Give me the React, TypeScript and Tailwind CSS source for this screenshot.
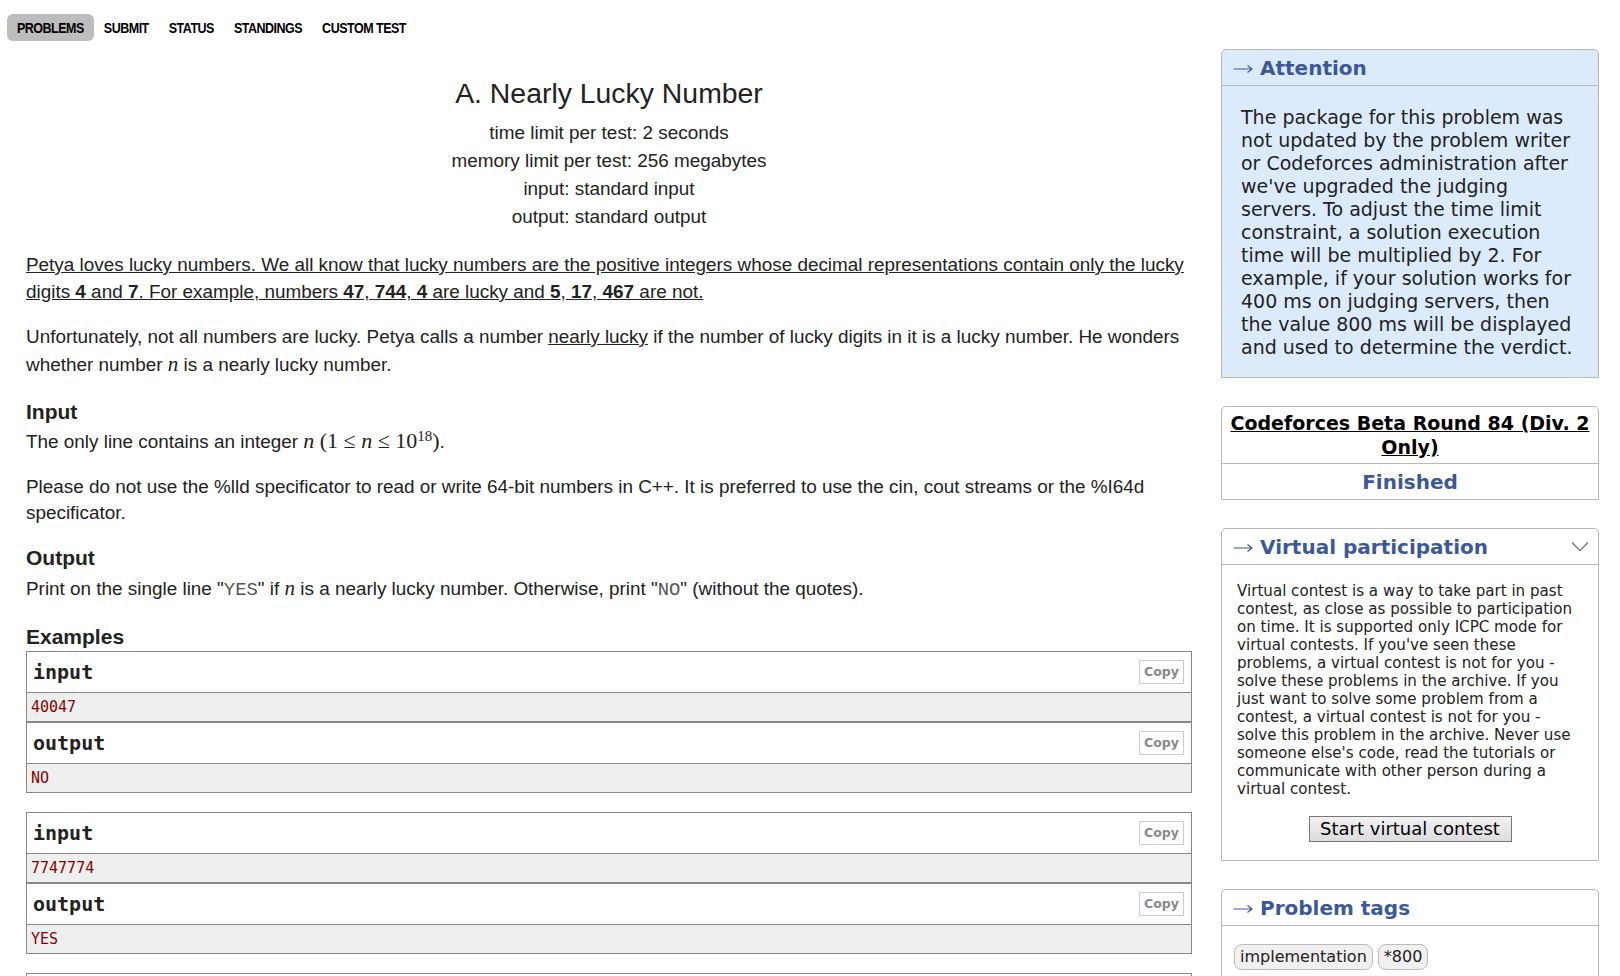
import React from 'react';

const samples = [
  { input: '40047', output: 'NO' },
  { input: '7747774', output: 'YES' },
];

const navItems = ['PROBLEMS', 'SUBMIT', 'STATUS', 'STANDINGS', 'CUSTOM TEST'];

function CopyButton() {
  return (
    <span className="flex h-[24px] w-[45px] items-center justify-center border border-[#ccc] bg-white font-['DejaVu_Sans',Verdana,sans-serif] text-[12.5px] font-bold text-[#888]">
      Copy
    </span>
  );
}

function SampleSection({ title, data, first }: { title: string; data: string; first?: boolean }) {
  return (
    <div className={first ? '' : 'border-t-2 border-[#888]'}>
      <div className="flex h-[40px] items-center justify-between pl-[6px] pr-[7px]">
        <span className="font-['DejaVu_Sans_Mono',monospace] text-[20px] font-bold text-[#222]">{title}</span>
        <CopyButton />
      </div>
      <div className="flex h-[29px] items-center border-t border-[#888] bg-[#efefef] pl-[4px] font-['DejaVu_Sans_Mono',monospace] text-[15px] text-[#8b0000]">
        {data}
      </div>
    </div>
  );
}

function Arrow() {
  return (
    <svg width="20" height="10" viewBox="0 0 20 10" fill="none" className="mr-[7px] mt-[2px]">
      <path d="M0.5 5H19M14.5 1.5L19 5L14.5 8.5" stroke="#3b5998" strokeWidth="1.2" />
    </svg>
  );
}

function SideBox({
  title,
  className,
  chevron,
  children,
}: {
  title: string;
  className?: string;
  chevron?: boolean;
  children: React.ReactNode;
}) {
  return (
    <div className={`rounded-t-[5px] border border-[#b9b9b9] ${className ?? ''}`}>
      <div className="flex h-[36px] items-center justify-between border-b border-[#b9b9b9] pl-[11px] pr-[9px]">
        <span className="flex items-center text-[20px] font-bold text-[#3b5998]">
          <Arrow />
          {title}
        </span>
        {chevron && (
          <svg width="18" height="11" viewBox="0 0 18 11" fill="none">
            <polyline points="1,1.5 9,9.5 17,1.5" stroke="#777" strokeWidth="1.3" />
          </svg>
        )}
      </div>
      {children}
    </div>
  );
}

export default function App() {
  return (
    <div className="min-h-screen bg-white text-[#222]">
      <div className="flex items-start gap-[29px] pl-[7px]">
        <main className="w-[1185px] shrink-0 font-['Liberation_Sans',Arial,sans-serif]">
          <nav className="mt-[14px] flex h-[27px] items-center">
            {navItems.map((item, i) => (
              <span
                key={item}
                className={`flex h-[27px] items-center rounded-[6px] px-[10px] pt-[2px] text-[12.5px] font-bold tracking-[-0.5px] text-black ${
                  i === 0 ? 'bg-[#bdbdbd]' : ''
                }`}
              >
                <span className="inline-block scale-y-[1.2]">{item}</span>
              </span>
            ))}
          </nav>

          <div className="pl-[19px]">
            <h1 className="mt-[36px] text-center text-[28.4px] leading-[32px] font-normal">A. Nearly Lucky Number</h1>
            <div className="mt-[10px] text-center text-[18.9px] leading-[28px]">
              <div>time limit per test: 2 seconds</div>
              <div>memory limit per test: 256 megabytes</div>
              <div>input: standard input</div>
              <div>output: standard output</div>
            </div>

            <div className="text-[18.9px]">
              <p className="mt-[20px] leading-[27px] underline">
                Petya loves lucky numbers. We all know that lucky numbers are the positive integers whose decimal
                representations contain only the lucky digits <b>4</b> and <b>7</b>. For example, numbers <b>47</b>,{' '}
                <b>744</b>, <b>4</b> are lucky and <b>5</b>, <b>17</b>, <b>467</b> are not.
              </p>
              <p className="mt-[18px] leading-[28px]">
                Unfortunately, not all numbers are lucky. Petya calls a number <span className="underline">nearly lucky</span> if
                the number of lucky digits in it is a lucky number. He wonders whether number{' '}
                <i className="font-['Liberation_Serif',serif] text-[21px] leading-none">n</i> is a nearly lucky number.
              </p>

              <h3 className="mt-[20px] text-[21px] leading-[26px] font-bold">Input</h3>
              <p className="mt-[3px] leading-[28px]">
                The only line contains an integer{' '}
                <span className="font-['Liberation_Serif',serif] text-[22px] leading-none">
                  <i>n</i> (1 ≤ <i>n</i> ≤ 10<sup className="text-[15px]">18</sup>)
                </span>
                .
              </p>
              <p className="mt-[18px] leading-[26px]">
                Please do not use the %lld specificator to read or write 64-bit numbers in C++. It is preferred to use the
                cin, cout streams or the %I64d specificator.
              </p>

              <h3 className="mt-[19px] text-[21px] leading-[26px] font-bold">Output</h3>
              <p className="mt-[4px] leading-[28px]">
                Print on the single line "<span className="font-['Liberation_Mono',monospace] text-[#555]">YES</span>" if{' '}
                <i className="font-['Liberation_Serif',serif] text-[21px] leading-none">n</i> is a nearly lucky number.
                Otherwise, print "<span className="font-['Liberation_Mono',monospace] text-[#555]">NO</span>" (without the
                quotes).
              </p>

              <h3 className="mt-[20px] text-[21px] leading-[26px] font-bold">Examples</h3>
            </div>

            <div className="mt-[1px] flex flex-col gap-[19px]">
              {samples.map((s) => (
                <div key={s.input} className="border border-[#888]">
                  <SampleSection title="input" data={s.input} first />
                  <SampleSection title="output" data={s.output} />
                </div>
              ))}
              <div className="h-[60px] border border-[#888]" />
            </div>
          </div>
        </main>

        <aside className="mt-[49px] flex w-[378px] shrink-0 flex-col gap-[28px] font-['DejaVu_Sans',Verdana,sans-serif]">
          <SideBox title="Attention" className="bg-[#dcebfc]">
            <div className="px-[19px] pt-[20px] pb-[18px] text-[19px] leading-[23px] text-[#222]">
              The package for this problem was not updated by the problem writer or Codeforces administration after we've
              upgraded the judging servers. To adjust the time limit constraint, a solution execution time will be
              multiplied by 2. For example, if your solution works for 400 ms on judging servers, then the value 800 ms
              will be displayed and used to determine the verdict.
            </div>
          </SideBox>

          <div className="rounded-t-[5px] border border-[#b9b9b9]">
            <div className="border-b border-[#b9b9b9] px-[6px] pt-[4px] pb-[4px] text-center text-[19px] leading-[24px] font-bold">
              <a className="text-black underline">Codeforces Beta Round 84 (Div. 2 Only)</a>
            </div>
            <div className="flex h-[35px] items-center justify-center text-[20px] font-bold text-[#3b5998]">Finished</div>
          </div>

          <SideBox title="Virtual participation" chevron>
            <div className="pt-[17px] pb-[18px]">
              <div className="pl-[15px] pr-[20px] text-[15.1px] leading-[18px] text-[#222]">
                Virtual contest is a way to take part in past contest, as close as possible to participation on time. It is
                supported only ICPC mode for virtual contests. If you've seen these problems, a virtual contest is not for
                you - solve these problems in the archive. If you just want to solve some problem from a contest, a virtual
                contest is not for you - solve this problem in the archive. Never use someone else's code, read the
                tutorials or communicate with other person during a virtual contest.
              </div>
              <div className="mt-[18px] flex justify-center">
                <button className="h-[26px] w-[203px] border border-[#777] bg-gradient-to-b from-[#f2f2f2] to-[#dcdcdc] text-[18px] leading-none text-black">
                  Start virtual contest
                </button>
              </div>
            </div>
          </SideBox>

          <SideBox title="Problem tags">
            <div className="flex gap-[5px] px-[12px] pt-[18px] pb-[20px]">
              <span className="flex h-[26px] items-center rounded-[8px] border border-[#bbb] bg-[#f0f0f0] px-[5px] text-[16px] text-[#222]">
                implementation
              </span>
              <span className="flex h-[26px] items-center rounded-[8px] border border-[#bbb] bg-[#f0f0f0] px-[5px] text-[16px] text-[#222]">
                *800
              </span>
            </div>
          </SideBox>
        </aside>
      </div>
    </div>
  );
}
